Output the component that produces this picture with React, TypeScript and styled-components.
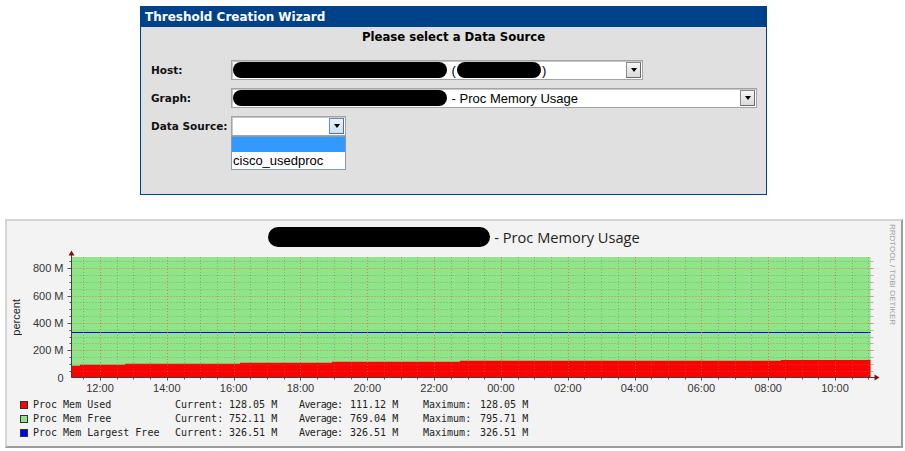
import React from "react";
import styled, { createGlobalStyle } from "styled-components";

const GlobalStyle = createGlobalStyle`
  html, body {
    margin: 0;
    padding: 0;
    background: #fff;
  }
  body {
    width: 905px;
    height: 451px;
    overflow: hidden;
  }
`;

const Page = styled.div`
  padding-top: 6px;
`;

/* ---------- wizard ---------- */

const Wizard = styled.div`
  margin-left: 140px;
  width: 627px;
  height: 189px;
  box-sizing: border-box;
  border: 1px solid #00428a;
  background: #e0e0e0;
  font-family: "DejaVu Sans", Verdana, sans-serif;
`;

const WizardHeader = styled.div`
  height: 20px;
  line-height: 20px;
  padding-left: 4px;
  background: #00428a;
  color: #fff;
  font-size: 12px;
  font-weight: bold;
`;

const Prompt = styled.div`
  height: 20px;
  line-height: 20px;
  text-align: center;
  font-size: 11.7px;
  font-weight: bold;
  color: #000;
`;

const Form = styled.div`
  display: grid;
  grid-template-columns: 80px auto;
  row-gap: 8px;
  margin-top: 13px;
  padding-left: 10px;
`;

const Label = styled.div`
  align-self: center;
  white-space: nowrap;
  font-size: 10.5px;
  font-weight: bold;
  color: #111;
`;

const Select = styled.div<{ $width: number }>`
  position: relative;
  display: flex;
  align-items: center;
  width: ${(p) => p.$width}px;
  height: 20px;
  box-sizing: border-box;
  border: 1px solid #a3a3a3;
  box-shadow: inset 1px 1px 0 #c8c8c8;
  background: #fff;
`;

const SelectValue = styled.div`
  flex: 1;
  display: flex;
  align-items: center;
  gap: 1px;
  padding-left: 1px;
  overflow: hidden;
  white-space: nowrap;
  font-family: "Liberation Sans", Arial, sans-serif;
  font-size: 13px;
  color: #000;
`;

const DropButton = styled.div<{ $hot?: boolean }>`
  display: flex;
  align-items: center;
  justify-content: center;
  width: 15px;
  height: 16px;
  margin-right: 1px;
  box-sizing: border-box;
  border: 1px solid ${(p) => (p.$hot ? "#6d8fb3" : "#8a8a8a")};
  border-right-color: ${(p) => (p.$hot ? "#4d6f93" : "#6a6a6a")};
  border-bottom-color: ${(p) => (p.$hot ? "#4d6f93" : "#6a6a6a")};
  background: ${(p) =>
    p.$hot
      ? "linear-gradient(#eaf3fc, #cfe2f5)"
      : "linear-gradient(#f6f6f6, #dadada)"};
  &::after {
    content: "";
    border-left: 3.5px solid transparent;
    border-right: 3.5px solid transparent;
    border-top: 4px solid #000;
  }
`;

const Blob = styled.span<{ $w: number; $h: number }>`
  display: inline-block;
  width: ${(p) => p.$w}px;
  height: ${(p) => p.$h}px;
  border-radius: ${(p) => p.$h / 2}px;
  background: #000;
`;

const DropList = styled.div`
  position: absolute;
  left: -1px;
  right: -1px;
  top: 19px;
  border: 1px solid #7f9db9;
  background: #fff;
  font-family: "Liberation Sans", Arial, sans-serif;
  font-size: 13px;
  color: #000;
`;

const Option = styled.div<{ $selected?: boolean }>`
  height: ${(p) => (p.$selected ? 15 : 17)}px;
  line-height: 17px;
  padding-left: 1px;
  background: ${(p) => (p.$selected ? "#3399ff" : "#fff")};
`;

/* ---------- graph ---------- */

const GraphBox = styled.div`
  margin: 24px 0 0 5px;
  width: 898px;
  height: 229px;
  box-sizing: border-box;
  border: 2px solid;
  border-color: #d4d4d4 #9c9c9c #9c9c9c #d4d4d4;
  background: #f3f3f3;
  display: flex;
`;

const MainCol = styled.div`
  width: 877px;
  display: flex;
  flex-direction: column;
`;

const GraphTitle = styled.div`
  height: 27px;
  box-sizing: border-box;
  padding: 5px 0 0 17px;
  display: flex;
  align-items: center;
  justify-content: center;
  gap: 4px;
  font-family: "Open Sans", "DejaVu Sans", sans-serif;
  font-size: 14.6px;
  color: #1e1e1e;
`;

const ChartRow = styled.div`
  display: flex;
  height: 148px;
`;

const AxisTitle = styled.div`
  width: 18px;
  display: flex;
  align-items: center;
  justify-content: center;
  padding-bottom: 9px;
  box-sizing: border-box;
  span {
    writing-mode: vertical-rl;
    transform: rotate(180deg);
    font-family: "Liberation Sans", Arial, sans-serif;
    font-size: 11px;
    color: #222;
  }
`;

const Watermark = styled.div`
  width: 17px;
  padding-top: 3px;
  display: flex;
  justify-content: center;
  span {
    writing-mode: vertical-rl;
    font-family: "Liberation Sans", Arial, sans-serif;
    font-size: 8px;
    color: #a0a0a0;
    white-space: nowrap;
  }
`;

const Legend = styled.div`
  padding: 2px 0 0 13px;
  font-family: "DejaVu Sans Mono", "Liberation Mono", monospace;
  font-size: 10px;
  line-height: 14px;
  color: #222;
`;

const LegendRow = styled.div`
  display: grid;
  grid-template-columns: 13px 142px 54px 70px 51px 73px 57px auto;
  align-items: center;
  white-space: pre;
`;

const LegendKey = styled.span<{ $squeeze?: boolean }>`
  letter-spacing: ${(p) => (p.$squeeze ? "-0.6px" : "0")};
`;

const Swatch = styled.span<{ $color: string }>`
  width: 6px;
  height: 6px;
  border: 1px solid #333;
  background: ${(p) => p.$color};
`;

/* ---------- chart drawing ---------- */

const X0 = 71.5;
const X1 = 870.5;
const Y0 = 377.5;
const YTOP = 257;
const xAt = (h: number) => 100 + h * 33.41; // hours after 12:00
const yAt = (m: number) => Y0 - m * 0.1365;

const used: [number, number][] = [
  [-0.86, 86],
  [-0.6, 93],
  [0.75, 100],
  [4.19, 108],
  [6.94, 115],
  [10.78, 122],
  [20.38, 128],
];

const usedPath = () => {
  let d = `M ${X0} ${Y0}`;
  used.forEach(([t, v], i) => {
    const xs = Math.max(X0, xAt(t));
    const xe = i + 1 < used.length ? xAt(used[i + 1][0]) : X1;
    d += ` L ${xs} ${yAt(v)} L ${xe} ${yAt(v)}`;
  });
  return d + ` L ${X1} ${Y0} Z`;
};

const MINOR = "rgba(120,120,120,0.55)";
const MAJOR = "rgba(240,90,90,0.75)";

const Chart: React.FC = () => {
  const hLines: number[] = [];
  for (let m = 50; m <= 850; m += 50) hLines.push(m);
  const vLines: number[] = [];
  for (let h = -0.5; h <= 23; h += 0.5) vLines.push(h);
  const hourLabels = Array.from({ length: 12 }, (_, i) => i * 2);

  return (
    <svg width={859} height={148} viewBox="25 248 859 148">
      <rect x={X0} y={YTOP} width={X1 - X0} height={Y0 - YTOP} fill="#90e588" />
      <path d={usedPath()} fill="#ff0000" />
      <line x1={X0} x2={X1} y1={332.5} y2={332.5} stroke="#0000ff" strokeWidth={1.2} />

      {hLines.map((m) => {
        const major = m % 200 === 0;
        const y = Math.round(yAt(m)) + 0.5;
        return (
          <g key={`h${m}`}>
            <line
              x1={X0}
              x2={X1}
              y1={y}
              y2={y}
              stroke={major ? MAJOR : MINOR}
              strokeDasharray="1 2"
            />
            <line x1={major ? 67.5 : 69.5} x2={X0} y1={y} y2={y} stroke="#555" />
            <line x1={X1} x2={X1 + 3} y1={y} y2={y} stroke={major ? MAJOR : MINOR} />
          </g>
        );
      })}

      {vLines.map((h) => {
        const x = Math.round(xAt(h)) + 0.5;
        if (x <= X0 || x >= X1) return null;
        const major = h % 2 === 0;
        return (
          <g key={`v${h}`}>
            <line
              x1={x}
              x2={x}
              y1={YTOP}
              y2={Y0}
              stroke={major ? MAJOR : MINOR}
              strokeDasharray="1 2"
            />
            <line x1={x} x2={x} y1={Y0} y2={Y0 + (major ? 3 : 2)} stroke="#555" />
          </g>
        );
      })}

      <line x1={X0} x2={X0} y1={254} y2={Y0} stroke="#404040" />
      <line x1={X0} x2={876} y1={Y0} y2={Y0} stroke="#404040" />
      <polygon points="71.5,250.5 68.5,255.5 74.5,255.5" fill="#7a1414" />
      <polygon points="879.5,377.5 874.5,374.5 874.5,380.5" fill="#7a1414" />

      <g fontFamily="Liberation Sans, Arial, sans-serif" fontSize={11} fill="#333">
        {[0, 200, 400, 600, 800].map((m) => (
          <text key={m} x={63.5} y={yAt(m) + 4} textAnchor="end">
            {m === 0 ? "0" : `${m} M`}
          </text>
        ))}
        {hourLabels.map((h) => (
          <text key={h} x={xAt(h)} y={392} textAnchor="middle">
            {`${String((12 + h) % 24).padStart(2, "0")}:00`}
          </text>
        ))}
      </g>
    </svg>
  );
};

const legend = [
  { color: "#ff0000", name: "Proc Mem Used", cur: "128.05 M", avg: "111.12 M", max: "128.05 M" },
  { color: "#90e588", name: "Proc Mem Free", cur: "752.11 M", avg: "769.04 M", max: "795.71 M" },
  { color: "#0000ff", name: "Proc Mem Largest Free", cur: "326.51 M", avg: "326.51 M", max: "326.51 M" },
];

const App: React.FC = () => (
  <Page>
    <GlobalStyle />
    <Wizard>
      <WizardHeader>Threshold Creation Wizard</WizardHeader>
      <Prompt>Please select a Data Source</Prompt>
      <Form>
        <Label>Host:</Label>
        <Select $width={412}>
          <SelectValue>
            <Blob $w={214} $h={16} />
            <span>&nbsp;(</span>
            <Blob $w={84} $h={16} />
            <span>)</span>
          </SelectValue>
          <DropButton />
        </Select>

        <Label>Graph:</Label>
        <Select $width={526}>
          <SelectValue>
            <Blob $w={214} $h={16} />
            <span>&nbsp;- Proc Memory Usage</span>
          </SelectValue>
          <DropButton />
        </Select>

        <Label>Data Source:</Label>
        <Select $width={115}>
          <SelectValue />
          <DropButton $hot />
          <DropList>
            <Option $selected />
            <Option>cisco_usedproc</Option>
          </DropList>
        </Select>
      </Form>
    </Wizard>

    <GraphBox>
      <MainCol>
        <GraphTitle>
          <Blob $w={222} $h={20} />
          <span>- Proc Memory Usage</span>
        </GraphTitle>
        <ChartRow>
          <AxisTitle>
            <span>percent</span>
          </AxisTitle>
          <Chart />
        </ChartRow>
        <Legend>
          {legend.map((l) => (
            <LegendRow key={l.name}>
              <Swatch $color={l.color} />
              <span>{l.name}</span>
              <LegendKey>Current:</LegendKey>
              <span>{l.cur}</span>
              <LegendKey $squeeze>Average:</LegendKey>
              <span>{l.avg}</span>
              <LegendKey>Maximum:</LegendKey>
              <span>{l.max}</span>
            </LegendRow>
          ))}
        </Legend>
      </MainCol>
      <Watermark>
        <span>RRDTOOL / TOBI OETIKER</span>
      </Watermark>
    </GraphBox>
  </Page>
);

export default App;
